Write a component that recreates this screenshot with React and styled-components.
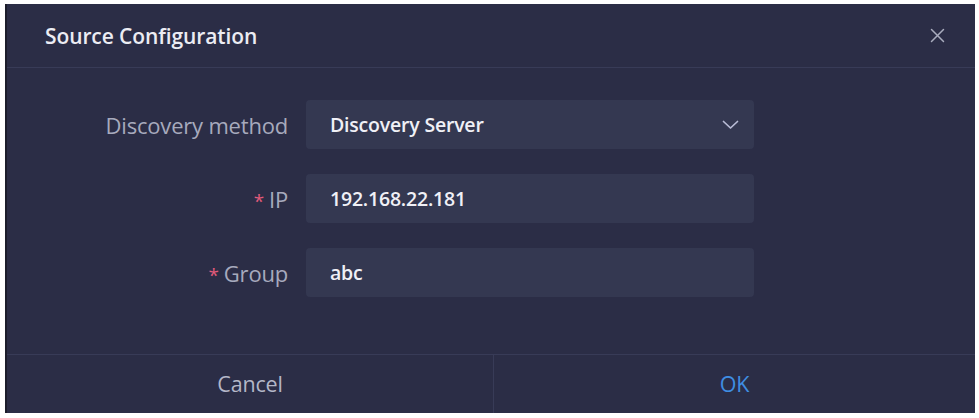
import React from "react";
import styled, { createGlobalStyle } from "styled-components";

const Global = createGlobalStyle`
  html, body { margin: 0; padding: 0; background: #ffffff; }
  body { font-family: "Open Sans", "Noto Sans", sans-serif; }
`;

const Modal = styled.div`
  margin: 4px 0 0 5px;
  width: 970px;
  height: 409px;
  background: #2b2d46;
  border-left: 2px solid #1c1d2b;
  box-sizing: border-box;
  display: flex;
  flex-direction: column;
`;

const Header = styled.div`
  height: 64px;
  box-sizing: border-box;
  display: flex;
  align-items: center;
  justify-content: space-between;
  padding: 0 29px 0 38px;
  border-bottom: 1px solid #383b57;
`;

const Title = styled.div`
  color: #ececf3;
  font-size: 21px;
  font-weight: 600;
  letter-spacing: -0.1px;
`;

const Close = styled.button`
  background: none;
  border: none;
  padding: 0;
  width: 18px;
  height: 18px;
  display: flex;
  align-items: center;
  justify-content: center;
  cursor: pointer;
`;

const Body = styled.div`
  flex: 1;
  display: flex;
  flex-direction: column;
  gap: 25px;
  padding-top: 32px;
`;

const Row = styled.div`
  display: flex;
  align-items: center;
  gap: 18px;
`;

const Label = styled.div`
  width: 281px;
  text-align: right;
  color: #a7aabd;
  font-size: 22px;
  letter-spacing: -0.2px;
`;

const Star = styled.span`
  color: #e05a7a;
  font-size: 19px;
  margin-right: 5px;
`;

const Field = styled.div`
  width: 448px;
  height: 49px;
  box-sizing: border-box;
  background: #343851;
  border-radius: 4px;
  display: flex;
  align-items: center;
  justify-content: space-between;
  padding: 0 15px 0 24px;
  color: #f0f0f6;
  font-size: 19.5px;
  font-weight: 600;
  letter-spacing: -0.2px;
`;

const Footer = styled.div`
  height: 58px;
  display: grid;
  grid-template-columns: 486px 1fr;
  border-top: 1px solid #383b57;
`;

const FooterButton = styled.button`
  background: none;
  border: none;
  font-family: inherit;
  font-size: 21.5px;
  letter-spacing: -0.2px;
  color: ${(p) => (p.$primary ? "#3f8de2" : "#b4b7c8")};
  border-left: ${(p) => (p.$primary ? "1px solid #383b57" : "none")};
  cursor: pointer;
  padding: 0 0 2px 0;
`;

export default function App() {
  return (
    <>
      <Global />
      <Modal>
        <Header>
          <Title>Source Configuration</Title>
          <Close aria-label="close">
            <svg width="15" height="15" viewBox="0 0 15 15">
              <path d="M1.5 1.5L13.5 13.5M13.5 1.5L1.5 13.5" stroke="#a9acbe" strokeWidth="1.5" strokeLinecap="round" />
            </svg>
          </Close>
        </Header>
        <Body>
          <Row>
            <Label>Discovery method</Label>
            <Field>
              <span>Discovery Server</span>
              <svg width="17" height="10" viewBox="0 0 17 10">
                <path d="M1.5 1.5L8.5 8L15.5 1.5" stroke="#b9bcd6" strokeWidth="1.7" fill="none" strokeLinecap="round" strokeLinejoin="round" />
              </svg>
            </Field>
          </Row>
          <Row>
            <Label><Star>*</Star>IP</Label>
            <Field><span>192.168.22.181</span></Field>
          </Row>
          <Row>
            <Label><Star>*</Star>Group</Label>
            <Field><span>abc</span></Field>
          </Row>
        </Body>
        <Footer>
          <FooterButton>Cancel</FooterButton>
          <FooterButton $primary>OK</FooterButton>
        </Footer>
      </Modal>
    </>
  );
}
